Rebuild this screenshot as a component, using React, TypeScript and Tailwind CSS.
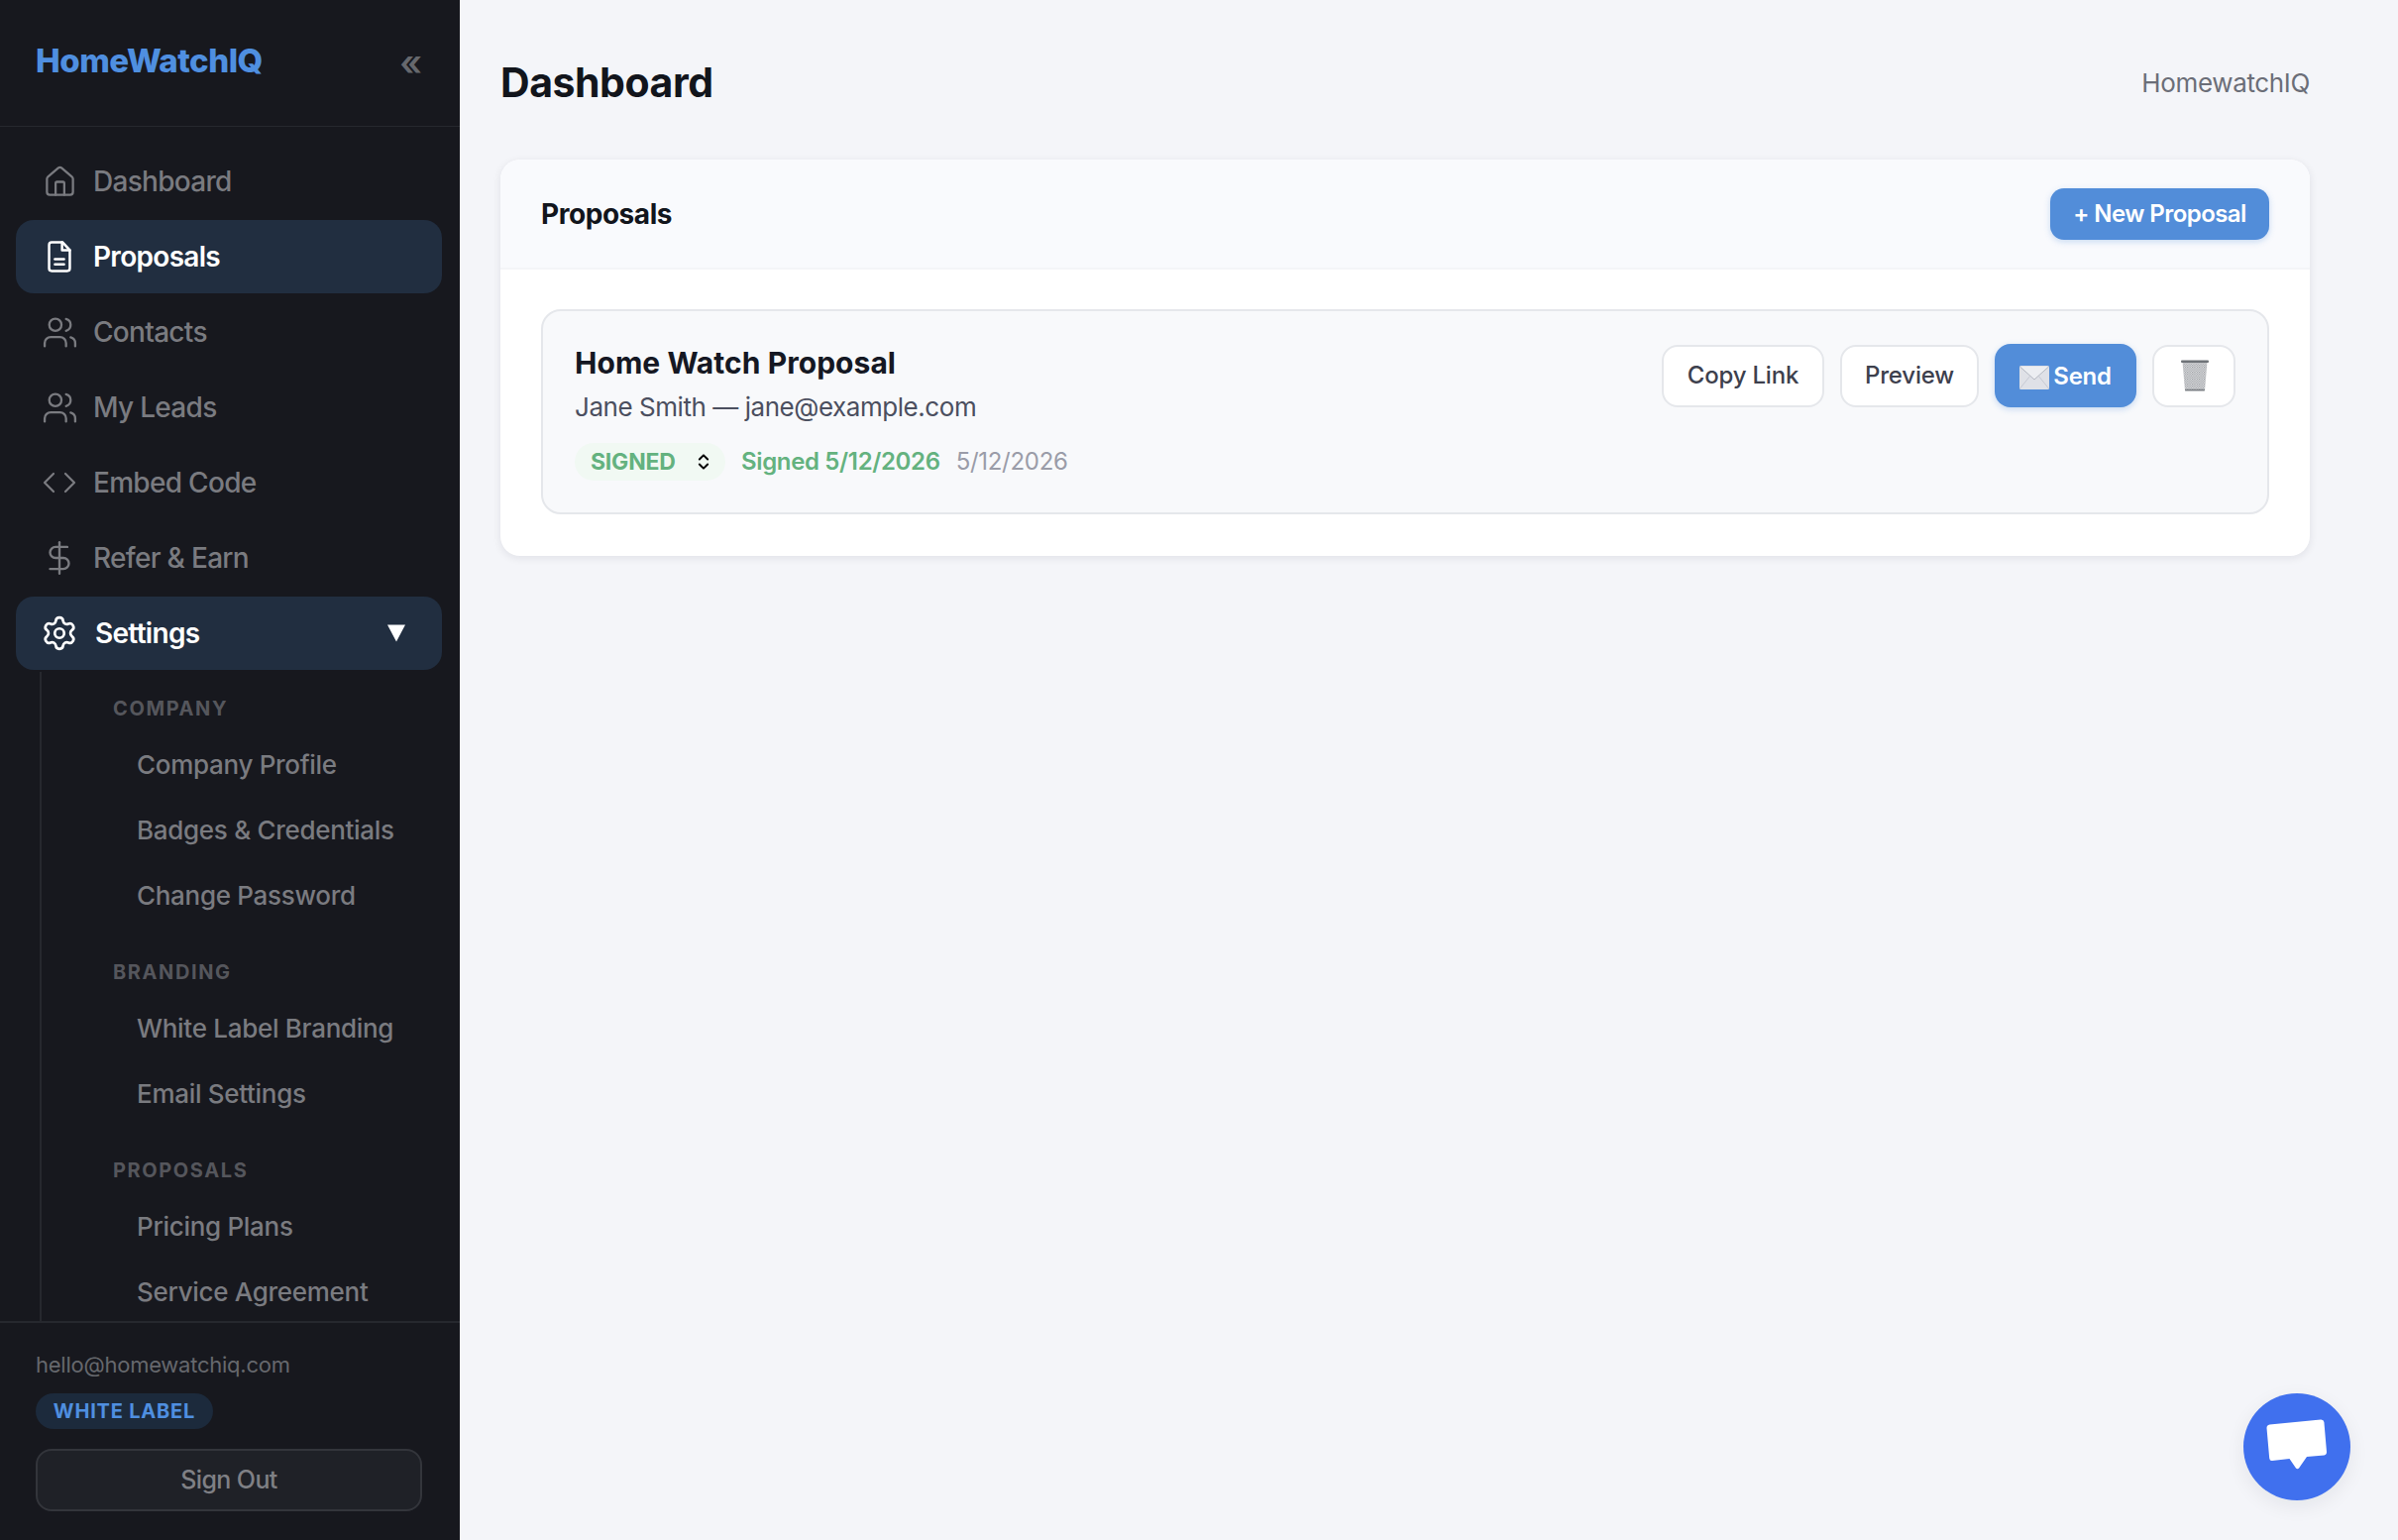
import type { ReactNode } from "react";
import { ChevronsUpDown, Code, DollarSign, House, Settings, Users } from "lucide-react";

const font = { fontFamily: "Inter, 'Liberation Sans', sans-serif" };

function ProposalIcon() {
  return (
    <svg className="shrink-0" width="32" height="34" viewBox="0 0 24 26" fill="none" stroke="currentColor" strokeWidth="1.9" strokeLinecap="round" strokeLinejoin="round">
      <path d="M14.5 2H6a2 2 0 0 0-2 2v18a2 2 0 0 0 2 2h12a2 2 0 0 0 2-2V8z" />
      <path d="M14 2v6h6" />
      <path d="M8.5 15h7" />
      <path d="M8.5 19h7" />
    </svg>
  );
}

function MailEmoji() {
  return (
    <svg className="mt-[2px]" width="30" height="24" viewBox="0 0 30 24">
      <rect x="0" y="0" width="30" height="24" rx="1.5" fill="#dfe1e7" />
      <path d="M0.5 1 L15 14 L29.5 1" fill="#eceef2" stroke="#b4b8c2" strokeWidth="1" />
      <path d="M0.5 23 L11 10 M29.5 23 L19 10" stroke="#c6c9d2" strokeWidth="1" fill="none" />
    </svg>
  );
}

function TrashEmoji() {
  return (
    <svg className="ml-[2px]" width="30" height="32" viewBox="0 0 30 32">
      <defs>
        <pattern id="mesh" width="2.4" height="2.4" patternUnits="userSpaceOnUse">
          <rect width="2.4" height="2.4" fill="#eceded" />
          <rect width="1.2" height="1.2" fill="#8d9096" />
          <rect x="1.2" y="1.2" width="1.2" height="1.2" fill="#9a9da3" />
        </pattern>
      </defs>
      <path d="M2.5 2 L27.5 2 L25 31 L5 31 Z" fill="url(#mesh)" />
      <rect x="1" y="0.5" width="28" height="2.4" rx="1" fill="#6f7378" />
      <rect x="5" y="29.8" width="20" height="1.8" rx="0.9" fill="#7b7f84" />
    </svg>
  );
}

function NavItem({ icon, label, active, textClass }: { icon: ReactNode; label: string; active?: boolean; textClass?: string }) {
  return (
    <div
      className={`mx-4 mb-[2px] flex h-[74px] w-[430px] items-center rounded-[18px] pl-[25px] ${
        active ? "bg-[#212e40] font-semibold text-white" : "font-medium text-[#7a7b80]"
      }`}
    >
      <span className="flex w-[38px] justify-center">{icon}</span>
      <span className={`text-[28px] leading-none tracking-[-0.7px] ${textClass ?? "ml-[15px]"}`}>{label}</span>
    </div>
  );
}

function SubLabel({ children, className }: { children: string; className?: string }) {
  return (
    <div className={`mb-[7px] flex h-[32px] items-center text-[20px] font-bold tracking-[1.6px] text-[#55565c] ${className ?? ""}`}>
      {children}
    </div>
  );
}

function SubItem({ children }: { children: string }) {
  return <div className="flex h-[66px] items-center pl-[24px] text-[26px] font-medium tracking-[-0.3px] text-[#7a7b80]">{children}</div>;
}

export default function App() {
  return (
    <div className="flex h-[1554px] w-[2420px] overflow-hidden bg-[#f4f5f9]" style={font}>
      <aside className="flex h-full w-[464px] shrink-0 flex-col bg-[#17181e]">
        <div className="flex h-[128px] shrink-0 items-center justify-between border-b border-[#26282e] pl-[36px] pr-[38px]">
          <span className="mb-[4px] text-[33px] font-extrabold tracking-[-0.5px] text-[#4f8fe0]">HomeWatchIQ</span>
          <span className="mb-[2px] text-[36px] leading-none font-semibold text-[#66686d]">«</span>
        </div>

        <nav className="min-h-0 flex-1 overflow-hidden pt-[18px]">
          <NavItem icon={<House className="shrink-0" size={35} strokeWidth={1.55} />} label="Dashboard" />
          <NavItem active icon={<ProposalIcon />} label="Proposals" />
          <NavItem icon={<Users className="shrink-0" size={37} strokeWidth={1.5} />} label="Contacts" />
          <NavItem icon={<Users className="shrink-0" size={37} strokeWidth={1.5} />} label="My Leads" />
          <NavItem icon={<Code className="shrink-0" size={36} strokeWidth={1.5} />} label="Embed Code" />
          <NavItem icon={<DollarSign className="shrink-0" size={38} strokeWidth={1.5} />} label="Refer &amp; Earn" />
          <div className="relative">
            <NavItem active icon={<Settings className="shrink-0" size={38} strokeWidth={1.7} />} label="Settings" textClass="ml-[17px]" />
            <svg className="absolute left-[390px] top-[28px]" width="20" height="18" viewBox="0 0 20 18">
              <path d="M1 0.5 H19 L10 17.5 Z" fill="#ffffff" />
            </svg>
          </div>

          <div className="ml-[40px] border-l-2 border-[#26282e] pl-[72px] pt-[21px]">
            <SubLabel>COMPANY</SubLabel>
            <SubItem>Company Profile</SubItem>
            <SubItem>Badges &amp; Credentials</SubItem>
            <SubItem>Change Password</SubItem>
            <SubLabel className="mt-[29px]">BRANDING</SubLabel>
            <SubItem>White Label Branding</SubItem>
            <SubItem>Email Settings</SubItem>
            <SubLabel className="mt-[29px]">PROPOSALS</SubLabel>
            <SubItem>Pricing Plans</SubItem>
            <SubItem>Service Agreement</SubItem>
          </div>
        </nav>

        <div className="shrink-0 border-t-2 border-[#26282e] px-[36px] pb-[29px] pt-[25px]">
          <div className="flex h-[34px] items-center text-[22px] tracking-[-0.25px] text-[#66686d]">hello@homewatchiq.com</div>
          <div className="mt-[12px] flex h-[36px] w-[179px] items-center justify-center rounded-full bg-[#1c2a3c] text-[20px] font-bold tracking-[0.8px] text-[#4f8fe0]">
            WHITE LABEL
          </div>
          <button className="mt-[20px] flex h-[63px] w-[390px] items-center justify-center rounded-[16px] border-2 border-[#33353b] bg-[#1f2127] text-[25px] font-medium tracking-[-0.6px] text-[#7f8085]">
            Sign Out
          </button>
        </div>
      </aside>

      <main className="min-w-0 flex-1 pl-[41px] pr-[89px] pt-[55px]">
        <header className="mb-[50px] flex h-[56px] items-center justify-between">
          <h1 className="mt-[1px] text-[41px] font-bold tracking-[-0.45px] text-[#12151c]">Dashboard</h1>
          <span className="text-[26px] tracking-[-0.35px] text-[#6b6e78]">HomewatchIQ</span>
        </header>

        <section className="h-[400px] overflow-hidden rounded-[20px] bg-white shadow-[0_2px_8px_rgba(17,24,39,0.09)]">
          <div className="flex h-[111px] items-center justify-between border-b-2 border-[#f4f5f8] bg-[#f9fafd] px-[41px]">
            <h2 className="mt-[1px] text-[28px] font-bold tracking-[-0.45px] text-[#12151c]">Proposals</h2>
            <button className="h-[52px] w-[221px] rounded-[14px] bg-[#528dd9] text-[24px] font-semibold tracking-[-0.55px] text-white shadow-[0_2px_6px_rgba(82,141,217,0.3)]">
              + New Proposal
            </button>
          </div>

          <div className="px-[41px] pt-[40px]">
            <div className="flex h-[207px] items-start justify-between rounded-[20px] border-2 border-[#e5e7eb] bg-[#f8f9fb] pl-[32px] pr-[32px] pt-[33px]">
              <div>
                <div className="mt-[1px] h-[36px] text-[30px] leading-[36px] font-bold tracking-[0.05px] text-[#151823]">Home Watch Proposal</div>
                <div className="mt-[9px] h-[36px] text-[26px] leading-[36px] tracking-[-0.45px] text-[#4b4f5f]">Jane Smith — jane@example.com</div>
                <div className="mt-[18px] flex h-[38px] items-center">
                  <div className="flex h-[38px] w-[152px] items-center rounded-full bg-[#f1f9f3] pl-[16px] text-[23px] font-bold tracking-[-0.2px] text-[#64b27f]">
                    SIGNED
                    <ChevronsUpDown className="ml-[18px] text-black" size={20} strokeWidth={2.4} />
                  </div>
                  <span className="ml-[16px] text-[24px] font-semibold tracking-[-0.35px] text-[#64b27f]">Signed 5/12/2026</span>
                  <span className="ml-[16px] text-[24px] tracking-[-0.3px] text-[#9a9ca8]">5/12/2026</span>
                </div>
              </div>

              <div className="flex items-center gap-[16px]">
                <button className="h-[63px] w-[164px] rounded-[16px] border-2 border-[#e5e7eb] bg-white text-[24px] font-medium tracking-[-0.2px] text-[#3d404d]">Copy Link</button>
                <button className="h-[63px] w-[140px] rounded-[16px] border-2 border-[#e5e7eb] bg-white text-[24px] font-medium tracking-[-0.2px] text-[#3d404d]">Preview</button>
                <button className="flex h-[64px] w-[143px] items-center justify-center gap-[4px] rounded-[16px] bg-[#528dd9] pt-[2px] text-[24px] font-semibold tracking-[-0.3px] text-white shadow-[0_2px_6px_rgba(82,141,217,0.3)]">
                  <MailEmoji />
                  Send
                </button>
                <button className="flex h-[63px] w-[84px] items-center justify-center rounded-[16px] border-2 border-[#e5e7eb] bg-white">
                  <TrashEmoji />
                </button>
              </div>
            </div>
          </div>
        </section>
      </main>

      <button className="absolute left-[2264px] top-[1406px] flex h-[108px] w-[108px] items-center justify-center rounded-full bg-[#4070ee] shadow-[0_6px_20px_rgba(17,24,39,0.07)]">
        <svg width="64" height="56" viewBox="0 0 64 56">
          <path d="M4.5 5.5 L56 0.5 Q59 0.3 59.4 3 L62 33 Q62.2 36 59.5 36.4 L42 38 L34 49.5 Q32.5 51 31 49.5 L24.5 40 L7 42 Q4.5 42.2 4.2 39.5 L1.5 9 Q1.4 6 4.5 5.5 Z" fill="#ffffff" />
        </svg>
      </button>
    </div>
  );
}
